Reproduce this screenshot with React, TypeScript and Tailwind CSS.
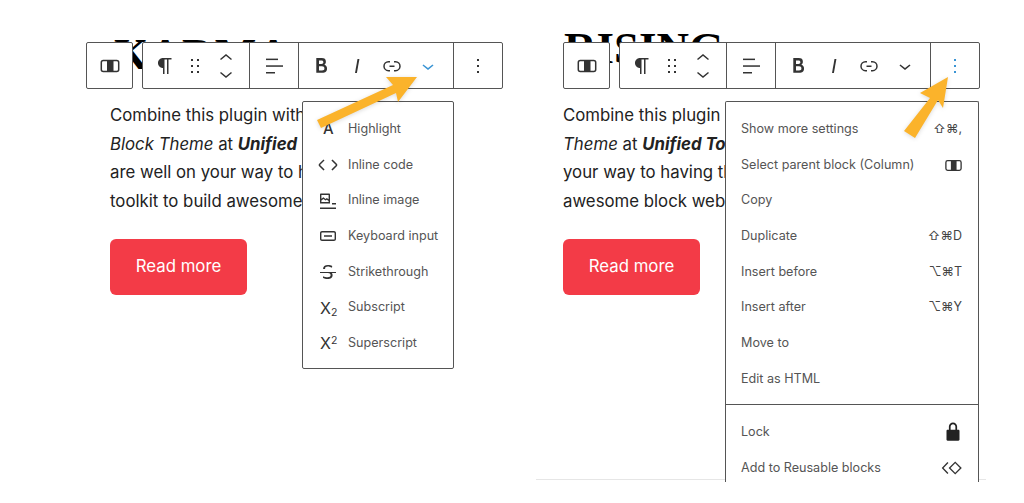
import React from 'react';

const Icon=({d,className="w-6 h-6"}:{d:string;className?:string})=>(
    <svg viewBox="0 0 24 24" className={className} fill="currentColor"><path d={d}/></svg>
);

const paths={
    pilcrow:"m9.99609 14v-.2251l.00391.0001v6.225h1.5v-14.5h2.5v14.5h1.5v-14.5h3v-1.5h-8.50391c-2.76142 0-5 2.23858-5 5 0 2.7614 2.23858 5 5 5z",
    drag:"M8 7h2V5H8v2zm0 6h2v-2H8v2zm0 6h2v-2H8v2zm6-14v2h2V5h-2zm0 8h2v-2h-2v2zm0 6h2v-2h-2v2z",
    bold:"M14.7 11.3c1-.6 1.5-1.6 1.5-3 0-2.3-1.3-3.4-4-3.4H7v14h5.8c1.4 0 2.5-.3 3.3-1 .8-.7 1.2-1.7 1.2-2.9.1-1.9-.8-3.1-2.6-3.7zm-5.1-4h2.3c.6 0 1.1.1 1.4.4.3.3.5.7.5 1.2s-.2 1-.5 1.2c-.3.3-.8.4-1.4.4H9.6V7.3zm4.6 9c-.4.3-1 .4-1.7.4H9.6v-3.9h2.9c.7 0 1.3.2 1.7.5.4.3.6.8.6 1.5s-.2 1.2-.6 1.5z",
    italic:"M12.5 5L10 19h1.9l2.5-14z",
    link:"M10 17.389H8.444A5.194 5.194 0 1 1 8.444 7H10v1.5H8.444a3.694 3.694 0 0 0 0 7.389H10v1.5ZM14 7h1.556a5.194 5.194 0 0 1 0 10.39H14v-1.5h1.556a3.694 3.694 0 0 0 0-7.39H14V7Zm-4.5 6h5v-1.5h-5V13Z",
    chevronDown:"M17.5 11.6L12 16l-5.5-4.4.9-1.2L12 14l4.5-3.6 1 1.2z",
    more:"M13 19h-2v-2h2v2zm0-6h-2v-2h2v2zm0-6h-2V5h2v2z",
    code:"M20.8 10.7l-4.3-4.3-1.1 1.1 4.3 4.3c.1.1.1.3 0 .4l-4.3 4.3 1.1 1.1 4.3-4.3c.7-.8.7-1.9 0-2.6zM4.2 11.8l4.3-4.3-1-1-4.3 4.3c-.7.7-.7 1.8 0 2.5l4.3 4.3 1.1-1.1-4.3-4.3c-.2-.1-.2-.3-.1-.4z",
    image:"M4 18.500h16V20H4v-1.500zM4 5.500c0-.6.4-1 1-1h8c.6 0 1 .4 1 1v9H4v-9zm1.400.4v3.900l2-1.600 2.200 1.700 1.200-.9 1.800 1.300V5.900H5.400zM5.400 13h7.200v-1l-1.800-1.300-1.200.9-2.200-1.700-2 1.600V13zM16 14h4v1.400h-4z",
    keyboard:"M6 7h12c1.100 0 2 .9 2 2v6c0 1.100-.9 2-2 2H6c-1.100 0-2-.9-2-2V9c0-1.100.9-2 2-2zm0 1.400c-.3 0-.6.3-.6.6v6c0 .3.3.6.6.6h12c.3 0 .6-.3.6-.6V9c0-.3-.3-.6-.6-.6H6zM8 11.300h8v1.400H8z",
    strike:"M9.100 9v-.5c0-.6.2-1.100.7-1.400.5-.3 1.200-.5 2-.5.7 0 1.400.1 2.100.3.7.2 1.400.5 2.100.9l.2-1.900c-.6-.3-1.200-.5-1.900-.7-.8-.1-1.600-.2-2.400-.2-1.500 0-2.700.3-3.600 1-.8.7-1.200 1.500-1.200 2.600V9h2zM20 12H4v1h8.300c.3.1.6.2.8.3.5.2.9.5 1.100.8.3.3.4.7.4 1.200 0 .7-.2 1.100-.8 1.500-.5.3-1.200.5-2.100.5-.8 0-1.600-.1-2.400-.3-.8-.2-1.500-.5-2.200-.8L7 18.100c.5.2 1.200.4 2 .6.8.2 1.600.3 2.400.3 1.700 0 3-.3 3.900-1 .9-.7 1.300-1.600 1.300-2.800 0-.9-.2-1.700-.7-2.200H20v-1z",
    lock:"M17 10h-1.200V7c0-2.100-1.700-3.800-3.800-3.800S8.200 4.900 8.200 7v3H7c-.6 0-1 .4-1 1v8c0 .6.4 1 1 1h10c.6 0 1-.4 1-1v-8c0-.6-.4-1-1-1zm-2.800 0H9.800V7c0-1.200 1-2.200 2.200-2.200s2.200 1 2.200 2.200v3z",
    reusable:"M7 5.500L.8 12 7 18.500l1.100-1L2.800 12l5.300-5.500-1.100-1zM15.500 4.800L8.300 12l7.200 7.200L22.700 12l-7.200-7.200zm0 2.100L20.600 12l-5.100 5.100L10.400 12l5.100-5.100z",
};

const ColumnIcon=({className="w-6 h-6"}:{className?:string})=>(
    <svg viewBox="0 0 24 24" className={className}>
        <rect x="3.300" y="6.500" width="17.400" height="11" rx="2" fill="none" stroke="currentColor" strokeWidth="1.500"/>
        <rect x="9" y="6.500" width="6.500" height="11" fill="currentColor"/>
    </svg>
);

const AlignIcon=()=>(
    <svg viewBox="0 0 24 24" className="w-6 h-6" fill="currentColor">
        <rect x="4" y="4.600" width="12" height="1.500"/>
        <rect x="4" y="11.300" width="17" height="1.500"/>
        <rect x="4" y="18" width="9" height="1.500"/>
    </svg>
);

const MoverIcon=()=>(
    <svg viewBox="0 0 16 28" className="w-4 h-7" fill="none" stroke="currentColor" strokeWidth="1.500">
        <path d="M2.500 7.500L8 3l5.500 4.500"/>
        <path d="M2.500 20.500L8 25l5.500-4.500"/>
    </svg>
);

const Toolbar=({activeChevron,activeMore}:{activeChevron?:boolean;activeMore?:boolean})=>(
    <div className="absolute left-[86px] top-[42px] flex gap-[9px] text-[#333]">
        <div className="w-[47px] h-[47px] flex items-center justify-center bg-white border border-[#555] rounded-[2px]">
            <ColumnIcon/>
        </div>
        <div className="w-[361px] h-[47px] flex bg-white border border-[#555] rounded-[2px]">
            <div className="w-[107px] flex items-center border-r border-[#555] pl-[10px]">
                <Icon d={paths.pilcrow} className="w-6 h-6"/>
                <Icon d={paths.drag} className="w-6 h-6 ml-[6px]"/>
                <span className="ml-[11px]"><MoverIcon/></span>
            </div>
            <div className="w-[49px] flex items-center justify-center border-r border-[#555]">
                <AlignIcon/>
            </div>
            <div className="w-[155px] flex items-center border-r border-[#555] pl-[10px]">
                <Icon d={paths.bold} className="w-[25px] h-[25px]"/>
                <Icon d={paths.italic} className="w-6 h-6 ml-[11px]"/>
                <Icon d={paths.link} className="w-6 h-6 ml-[11px]"/>
                <Icon d={paths.chevronDown} className={`w-6 h-6 ml-[12px] ${activeChevron?"text-[#3a94d4]":"text-[#333]"}`}/>
            </div>
            <div className="flex-1 flex items-center justify-center pr-[1px]">
                <Icon d={paths.more} className={`w-6 h-6 ${activeMore?"text-[#3a94d4]":"text-[#333]"}`}/>
            </div>
        </div>
    </div>
);

const formatItems=[
    {label:"Highlight",icon:<span className="text-[15px] font-medium ml-[7px]">A</span>},
    {label:"Inline code",icon:<Icon d={paths.code}/>},
    {label:"Inline image",icon:<Icon d={paths.image}/>},
    {label:"Keyboard input",icon:<Icon d={paths.keyboard}/>},
    {label:"Strikethrough",icon:<Icon d={paths.strike}/>},
    {label:"Subscript",icon:<span className="ml-[4px] text-[16px] leading-none">X<sub className="text-[10.500px]">2</sub></span>},
    {label:"Superscript",icon:<span className="ml-[4px] text-[16px] leading-none">X<sup className="text-[10.500px]">2</sup></span>},
];

const moreItems:{label:string;right?:React.ReactNode}[]=[
    {label:"Show more settings",right:"⇧⌘,"},
    {label:"Select parent block (Column)",right:<ColumnIcon className="w-[21px] h-[21px] -mr-[2px] text-[#333]"/>},
    {label:"Copy"},
    {label:"Duplicate",right:"⇧⌘D"},
    {label:"Insert before",right:"⌥⌘T"},
    {label:"Insert after",right:"⌥⌘Y"},
    {label:"Move to"},
    {label:"Edit as HTML"},
];

const FormatMenu=()=>(
    <div className="absolute left-[302px] top-[101px] w-[152px] h-[268px] bg-white border border-[#555] rounded-[2px] pt-[9.500px]">
        {formatItems.map((item)=>(
            <div key={item.label} className="h-[35.700px] flex items-center text-[12.600px] text-[#555]">
                <span className="w-[45px] pl-[13px] flex justify-start text-[#333]">{item.icon}</span>
                <span>{item.label}</span>
            </div>
        ))}
    </div>
);

const MoreMenu=()=>(
    <div className="absolute left-[248px] top-[101px] w-[254px] h-[381px] bg-white border border-[#555] border-b-0 rounded-t-[2px] pt-[9.500px] text-[12.600px] text-[#555]">
        {moreItems.map((item)=>(
            <div key={item.label} className="h-[35.700px] flex items-center justify-between pl-[15px] pr-[16px]">
                <span>{item.label}</span>
                {item.right&&<span className="text-[#444] text-[12.500px]">{item.right}</span>}
            </div>
        ))}
        <div className="border-t border-[#555] mt-[7px] pt-[9.500px]">
            <div className="h-[35.700px] flex items-center justify-between pl-[15px] pr-[12px]">
                <span>Lock</span>
                <Icon d={paths.lock} className="w-[26px] h-[26px] text-[#222]"/>
            </div>
            <div className="h-[35.700px] flex items-center justify-between pl-[15px] pr-[15px]">
                <span>Add to Reusable blocks</span>
                <Icon d={paths.reusable} className="w-[22px] h-[22px] text-[#333]"/>
            </div>
        </div>
    </div>
);

const ReadMore=()=>(
    <div className="w-[137px] h-[56px] mt-[24px] flex items-center justify-center rounded-[6px] bg-[#f33b47] text-white text-[16.800px]">
        Read more
    </div>
);

export default function App(){
    return (
        <div className="relative w-[1024px] h-[503px] overflow-hidden bg-white flex font-[Inter,sans-serif] text-[#222]">
            {/* left panel */}
            <div className="relative w-[477px] shrink-0 pl-[110px]">
                <div className="h-[101px] overflow-hidden">
                    <div className="pt-[33px] pl-[4px] font-['Liberation_Serif',serif] font-bold text-[44px] leading-[44px] text-black tracking-[1px]">KARMA</div>
                </div>
                <p className="text-[16.800px] leading-[28.500px] whitespace-nowrap">
                    Combine this plugin with the<br/>
                    <em>Block Theme</em> at <strong><em>Unified</em></strong> Tools<br/>
                    are well on your way to having<br/>
                    toolkit to build awesome
                </p>
                <ReadMore/>
                <Toolbar activeChevron/>
                <FormatMenu/>
            </div>
            {/* right panel */}
            <div className="relative w-[547px] shrink-0 pl-[86px]">
                <div className="h-[101px] overflow-hidden">
                    <div className="pt-[26px] pl-[1px] font-['Liberation_Serif',serif] font-bold text-[45px] leading-[44px] text-black">RISING</div>
                </div>
                <p className="text-[16.800px] leading-[28.500px] whitespace-nowrap">
                    Combine this plugin with the<br/>
                    <em>Theme</em> at <strong><em>Unified Tools</em></strong>, and<br/>
                    your way to having the<br/>
                    awesome block websites
                </p>
                <ReadMore/>
                <div className="absolute left-[59px] top-[479px] w-[450px] border-t border-[#e6e6e6]"/>
                <Toolbar activeMore/>
                <MoreMenu/>
            </div>
            {/* annotation arrows */}
            <svg className="absolute inset-0 w-[1024px] h-[503px] pointer-events-none drop-shadow-sm" viewBox="0 0 1024 503">
                <polygon points="317,120 393,85 386,77 417,77 398,102 396,93 321,128" fill="#fbb32b"/>
                <polygon points="948,77 943,108 938,100 915,138 904,131 930,98 920,93" fill="#fbb32b"/>
            </svg>
        </div>
    );
}
